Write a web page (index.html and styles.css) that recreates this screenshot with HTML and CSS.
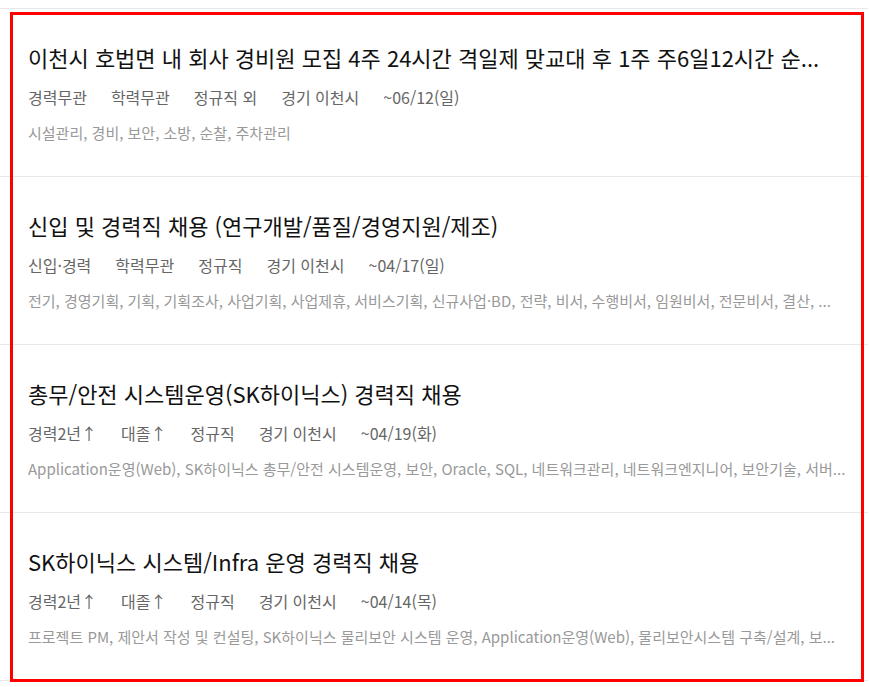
FILE: index.html
```html
<!DOCTYPE html>
<html lang="ko">
<head>
    <meta charset="UTF-8">
    <meta name="viewport" content="width=device-width, initial-scale=1.0">
    <title>채용정보</title>
    <link rel="stylesheet" href="styles.css">
</head>
<body>
    <ul class="job-list">
        <li class="job-item">
            <a class="job-title" href="#">이천시 호법면 내 회사 경비원 모집 4주 24시간 격일제 맞교대 후 1주 주6일12시간 순...</a>
            <div class="job-meta">
                <span>경력무관</span>
                <span>학력무관</span>
                <span>정규직 외</span>
                <span>경기 이천시</span>
                <span>~06/12(일)</span>
            </div>
            <p class="job-tags">시설관리, 경비, 보안, 소방, 순찰, 주차관리</p>
        </li>
        <li class="job-item">
            <a class="job-title" href="#">신입 및 경력직 채용 (연구개발/품질/경영지원/제조)</a>
            <div class="job-meta">
                <span>신입·경력</span>
                <span>학력무관</span>
                <span>정규직</span>
                <span>경기 이천시</span>
                <span>~04/17(일)</span>
            </div>
            <p class="job-tags">전기, 경영기획, 기획, 기획조사, 사업기획, 사업제휴, 서비스기획, 신규사업·BD, 전략, 비서, 수행비서, 임원비서, 전문비서, 결산, ...</p>
        </li>
        <li class="job-item">
            <a class="job-title" href="#">총무/안전 시스템운영(SK하이닉스) 경력직 채용</a>
            <div class="job-meta">
                <span>경력2년↑</span>
                <span>대졸↑</span>
                <span>정규직</span>
                <span>경기 이천시</span>
                <span>~04/19(화)</span>
            </div>
            <p class="job-tags">Application운영(Web), SK하이닉스 총무/안전 시스템운영, 보안, Oracle, SQL, 네트워크관리, 네트워크엔지니어, 보안기술, 서버...</p>
        </li>
        <li class="job-item">
            <a class="job-title" href="#">SK하이닉스 시스템/Infra 운영 경력직 채용</a>
            <div class="job-meta">
                <span>경력2년↑</span>
                <span>대졸↑</span>
                <span>정규직</span>
                <span>경기 이천시</span>
                <span>~04/14(목)</span>
            </div>
            <p class="job-tags">프로젝트 PM, 제안서 작성 및 컨설팅, SK하이닉스 물리보안 시스템 운영, Application운영(Web), 물리보안시스템 구축/설계, 보...</p>
        </li>
    </ul>

    <div class="highlight"></div>
</body>
</html>
```

FILE: styles.css
```css
body {
    margin: 0;
    padding-top: 8px;
    font-family: 'Noto Sans CJK KR', 'Noto Sans', sans-serif;
    background: #fff;
    color: #222;
}

.job-list {
    list-style: none;
    margin: 0;
    padding: 0;
    width: 868px;
    border-bottom: 1px solid #e8e8e8;
}

.job-item {
    border-top: 1px solid #e8e8e8;
    height: 168px;
    padding: 33px 12px 0 28px;
    box-sizing: border-box;
}

.job-title {
    display: block;
    font-size: 22px;
    line-height: 30px;
    color: #111;
    text-decoration: none;
    white-space: nowrap;
}

.job-meta {
    display: flex;
    gap: 24px;
    margin-top: 14px;
    font-size: 16px;
    line-height: 22px;
    color: #666;
}

.job-tags {
    margin: 15px 0 0;
    font-size: 15px;
    line-height: 20px;
    color: #999;
    white-space: nowrap;
}

.highlight {
    position: absolute;
    left: 10px;
    top: 12px;
    width: 854px;
    height: 670px;
    border: 3px solid #ff0000;
    box-sizing: border-box;
    pointer-events: none;
}
```
